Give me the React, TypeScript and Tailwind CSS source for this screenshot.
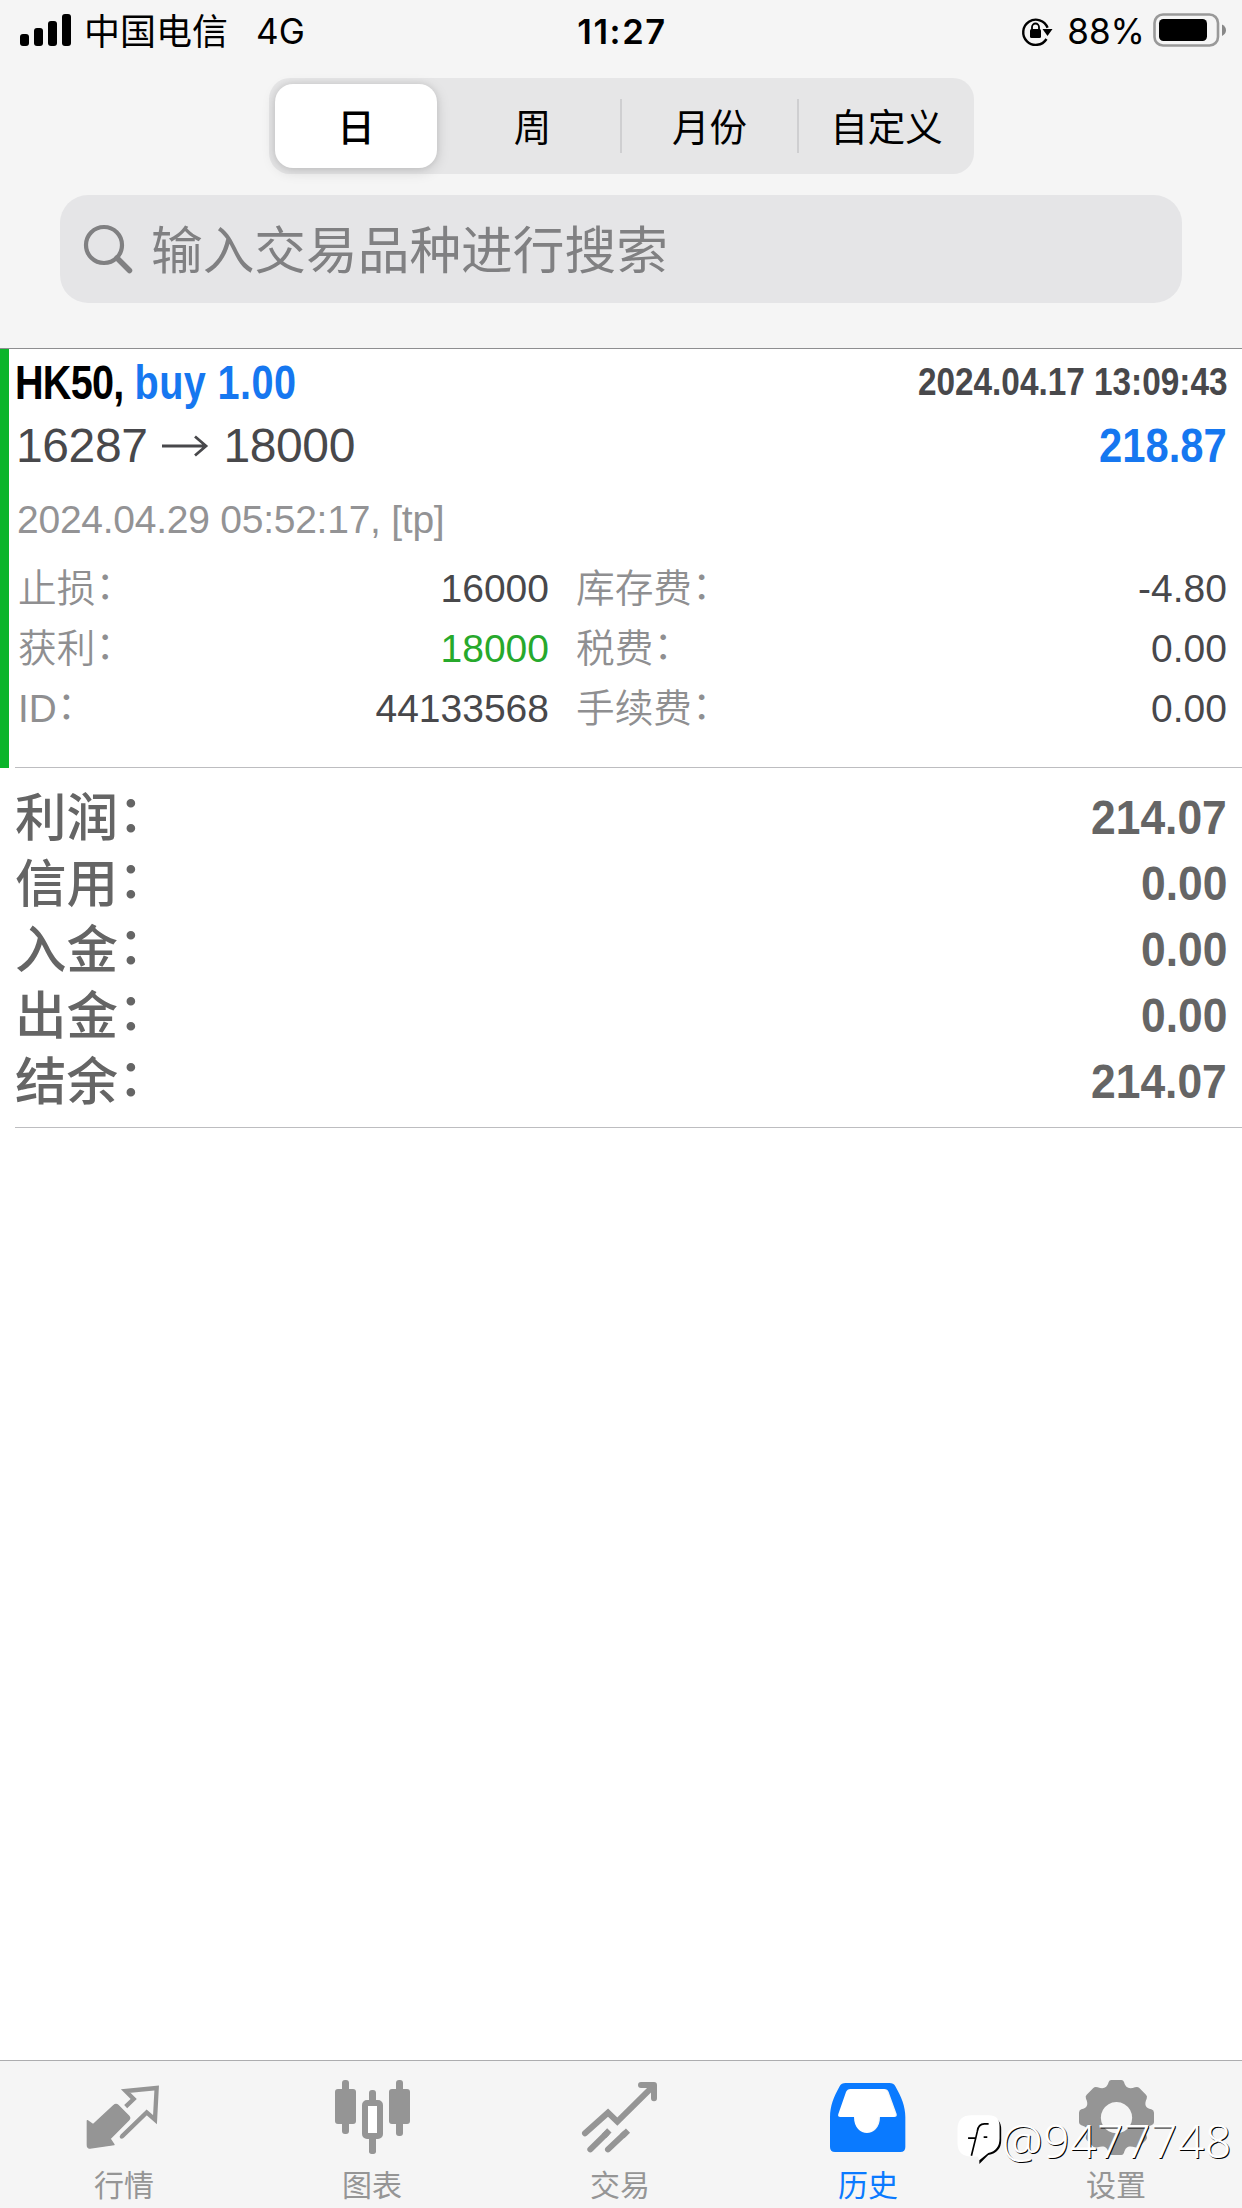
import type { ReactNode } from "react";
import clsx from "clsx";

type TTab = {
  label: string;
  active?: boolean;
  icon: ReactNode;
};

const periods = ["日", "周", "月份", "自定义"];

const details = [
  { label: "止损", value: "16000", label2: "库存费", value2: "-4.80" },
  { label: "获利", value: "18000", label2: "税费", value2: "0.00", green: true },
  { label: "ID", value: "44133568", label2: "手续费", value2: "0.00" },
];

const summary = [
  { label: "利润", value: "214.07" },
  { label: "信用", value: "0.00" },
  { label: "入金", value: "0.00" },
  { label: "出金", value: "0.00" },
  { label: "结余", value: "214.07" },
];

const tabs: TTab[] = [
  {
    label: "行情",
    icon: (
      <svg viewBox="252 78 240 240" className="size-20">
        <path
          d="M342 166q6-6 12 0l32 32q6 6 0 12l-56 56 12 18-72 10q-8 1-8-9v-73l17 12z"
          fill="currentColor"
          stroke="currentColor"
          strokeWidth="4"
          strokeLinejoin="round"
        />
        <path
          d="M377 170l24-23-24-24 93-9-5 95-25-22-74 72"
          fill="none"
          stroke="currentColor"
          strokeWidth="13"
        />
        <circle cx="365" cy="260" r="6" fill="currentColor" />
      </svg>
    ),
  },
  {
    label: "图表",
    icon: (
      <svg viewBox="996 78 240 240" className="size-20" fill="currentColor">
        <rect x="1026" y="90" width="21" height="162" rx="9" />
        <rect x="1005" y="117" width="63" height="105" rx="9" />
        <rect x="1188" y="90" width="21" height="168" rx="9" />
        <rect x="1167" y="117" width="63" height="105" rx="9" />
        <rect x="1107" y="120" width="21" height="40" rx="9" />
        <rect x="1107" y="255" width="21" height="57" rx="8" />
        <rect x="1095" y="159" width="45" height="99" rx="6" fill="white" stroke="currentColor" strokeWidth="18" />
      </svg>
    ),
  },
  {
    label: "交易",
    icon: (
      <svg
        viewBox="120 78 240 240"
        className="size-20"
        fill="none"
        stroke="currentColor"
        strokeWidth="18"
        strokeLinecap="round"
      >
        <path d="M135 250l69-62 28 27L338 110" />
        <path d="M303 105h39v40" strokeLinejoin="round" />
        <path d="M151 298l48-47M204 298l50-47" />
        <path d="M192 258l16-17M247 258l17-16" strokeLinecap="butt" />
      </svg>
    ),
  },
  {
    label: "历史",
    active: true,
    icon: (
      <svg viewBox="864 78 240 240" className="size-20">
        <path
          fill="white"
          d="M931 117h98q9 0 13 9l24 66q2 9-7 9h-43c0 64-78 64-78 0h-41q-9 0-6-9l23-66q4-9 13-9z"
        />
        <path
          fill="currentColor"
          fillRule="evenodd"
          d="M917 99h131q13 0 18 10c18 32 30 60 30 92v90q0 15-15 15H885q-15 0-15-15v-90c0-32 11-60 29-92q5-10 18-10zM931 117q-9 0-13 9l-23 66q-3 9 6 9h41c0 64 78 64 78 0h43q9 0 7-9l-24-66q-3-9-13-9z"
        />
      </svg>
    ),
  },
  {
    label: "设置",
    icon: (
      <svg viewBox="468 78 240 240" className="size-20">
        <path
          fill="currentColor"
          fillRule="evenodd"
          d="M574 90h30q6 0 8 6c5 18 15 22 33 16q8-3 13 2l20 20q5 5 2 12c-8 18-4 27 14 32q8 3 8 10v29q0 6-8 9c-18 5-22 15-14 32q3 7-2 12l-20 20q-5 5-13 2c-18-6-28-2-33 16q-2 7-8 7h-30q-6 0-8-7c-5-18-15-22-33-16q-8 3-13-2l-20-20q-5-5-2-12c8-17 4-27-14-32q-7-3-7-9v-29q0-7 7-10c18-5 22-14 14-32q-3-7 2-12l20-20q5-5 13-2c18 6 28 2 33-16q2-6 8-6zM589 156a47 47 0 1 0 1 0z"
        />
      </svg>
    ),
  },
];

const Colon = () => <span className="align-[0.07em] leading-none">：</span>;

const StatusBar = () => (
  <div className="grid h-[60px] grid-cols-3 font-['Inter','Noto_Sans_CJK_SC',sans-serif] text-[35px] leading-[62px] text-black">
    <div className="flex pl-5">
      <svg viewBox="0 0 52 60" className="h-[60px] w-[52px]">
        <rect x="0" y="34" width="9" height="12" rx="3" />
        <rect x="14" y="28" width="9" height="18" rx="3" />
        <rect x="28" y="21" width="9" height="25" rx="3" />
        <rect x="42" y="14" width="9" height="32" rx="3" />
      </svg>
      <span className="ml-3 text-[36px] leading-[64px]">中国电信</span>
      <span className="ml-7">4G</span>
    </div>
    <div className="pl-0.5 text-center text-[34.5px] leading-[63px] font-semibold tracking-[1.6px]">11:27</div>
    <div className="flex justify-end pr-[15px]">
      <svg viewBox="0 0 34 60" className="h-[60px] w-[34px]">
        <path d="M26.5 39A12.6 12.6 0 1 1 27.6 27.8" fill="none" stroke="black" strokeWidth="2.4" />
        <path d="M22.5 29h10l-5 7z" />
        <rect x="10" y="29" width="11" height="9" rx="1.5" />
        <path d="M12 30v-3a3.5 3.5 0 0 1 7 0v3" fill="none" stroke="black" strokeWidth="1.8" />
      </svg>
      <span className="ml-[13px]">88%</span>
      <svg viewBox="0 0 74 60" className="ml-2 h-[60px] w-[74px]">
        <rect x="1.5" y="14.5" width="63.5" height="31" rx="8.5" fill="none" stroke="#999" strokeWidth="2.6" />
        <rect x="6" y="19" width="48" height="22" rx="4.5" />
        <path d="M69 24.5q4 2 4 5.7t-4 5.7z" fill="#888" />
      </svg>
    </div>
  </div>
);

const Header = () => (
  <header className="h-[349px] border-b border-[#8e8e90] bg-[#f5f5f5]">
    <StatusBar />
    <div className="mt-[18px] mr-[268px] ml-[269px] flex h-24 items-center rounded-[21px] bg-[#e6e6e7] py-1.5 pl-1.5 text-[37.5px]">
      {periods.map((period, i) => (
        <div
          key={period}
          className={clsx(
            "flex items-center justify-center",
            i === 0 && "mr-2 h-[84px] w-[162px] rounded-[18px] bg-white font-medium shadow-[0_3px_14px_rgba(0,0,0,0.15),0_0_6px_rgba(0,0,0,0.08)]",
            i === 1 && "h-[54px] flex-1",
            i > 1 && "h-[54px] flex-1 border-l-2 border-[#cfcfd1]",
          )}
        >
          <span className="pt-[5px]">{period}</span>
        </div>
      ))}
    </div>
    <div className="mt-[21px] ml-[60px] flex h-[108px] w-[1122px] items-center rounded-[28px] bg-[#e5e5e7] pl-[23px] text-[51.7px] text-[#808082]">
      <svg viewBox="0 0 52 52" className="size-[52px]" fill="none" stroke="currentColor">
        <circle cx="21" cy="22" r="18" strokeWidth="4.2" />
        <path d="M34 35l12.5 12.5" strokeWidth="5.5" strokeLinecap="round" />
      </svg>
      <span className="ml-4 pt-[5px]">输入交易品种进行搜索</span>
    </div>
  </header>
);

const Trade = () => (
  <section className="flex h-[419px]">
    <div className="w-[9px] bg-[#0bb52b]" />
    <div className="ml-1.5 flex-1 border-b border-[#bdbdc0] pr-[15px]">
      <div className="flex h-[67px] items-center justify-between font-bold whitespace-nowrap">
        <div className="origin-left scale-x-[0.825] pt-px text-[48px]">
          <span className="tracking-[-0.9px] text-black">HK50,</span>{" "}
          <span className="tracking-[0.5px] text-[#1677f0]">buy 1.00</span>
        </div>
        <div className="origin-right scale-x-[0.866] pb-px text-[38.5px] text-[#48484b]">2024.04.17 13:09:43</div>
      </div>
      <div className="flex h-[60px] items-center justify-between text-[48px]">
        <div className="flex items-center pl-px tracking-[-0.4px] text-[#48484b]">
          16287
          <svg viewBox="0 0 48 24" className="mr-3.5 ml-[14px] h-6 w-12" fill="none" stroke="currentColor" strokeWidth="2.8">
            <path d="M1 12h44M34 2.500L45 12 34 21.500" />
          </svg>
          18000
        </div>
        <div className="origin-right scale-x-[0.87] font-bold text-[#1677f0]">218.87</div>
      </div>
      <div className="flex h-[83px] items-center pt-1.5 pl-0.5 text-[39px] tracking-[-0.25px] text-[#939395]">
        2024.04.29 05:52:17, [tp]
      </div>
      {details.map((row) => (
        <div key={row.label} className="flex h-[60px] items-center pl-[3px] text-[39px] text-[#48484b]">
          <div className="w-[200px] text-[38.7px] font-[350] text-[#8f8f91]">
            {row.label}
            <Colon />
          </div>
          <div className={clsx("w-[331px] text-right", row.green && "text-[#27a92c]")}>{row.value}</div>
          <div className="ml-[27px] text-[38.7px] font-[350] text-[#8f8f91]">
            {row.label2}
            <Colon />
          </div>
          <div className="ml-auto">{row.value2}</div>
        </div>
      ))}
    </div>
  </section>
);

const Summary = () => (
  <section className="ml-[15px] h-[360px] border-b border-[#bdbdc0] pt-[17px] pr-[15px] text-[#656565]">
    {summary.map((row) => (
      <div key={row.label} className="flex h-[66px] items-center justify-between leading-[66px]">
        <span className="text-[51.5px] font-medium">
          {row.label}
          <Colon />
        </span>
        <span className="origin-right scale-x-[0.925] text-[48px] font-bold">{row.value}</span>
      </div>
    ))}
  </section>
);

const Watermark = () => (
  <div className="absolute top-[52px] right-2.5 flex items-center text-white">
    <svg viewBox="98 205 150 160" className="-mr-1 h-[53px] w-[50px]">
      <path d="M150 219h50q34 0 34 35v34q0 36-39 44l-27 27v-17z" fill="black" />
      <path d="M145 212h52q32 0 32 34v36q0 36-34 44l-27 22-5-12h-20q-41 0-41-42v-40q0-42 43-42z" fill="white" />
      <path d="M196 238h-13q-18 0-21 22l-4 17-14 57M134 281h24M181 278h11" fill="none" stroke="black" strokeWidth="5" />
    </svg>
    <span className="font-['Noto_Sans',sans-serif] text-[46px] leading-[46px] font-light tracking-[0.7px] [text-shadow:1px_1px_0_black]">
      @9477748
    </span>
  </div>
);

const TabBar = () => (
  <nav className="relative mt-auto flex h-[148px] border-t border-[#adadaf] bg-[#f5f5f5] pr-0.5">
    {tabs.map(({ label, icon, active }) => (
      <div
        key={label}
        className={clsx("flex flex-1 flex-col items-center pt-[15px]", active ? "text-[#0a7aff]" : "text-[#959595]")}
      >
        {icon}
        <span className="mt-[11px] text-[30px] leading-[38px]">{label}</span>
      </div>
    ))}
    <Watermark />
  </nav>
);

const App = () => (
  <div className="flex h-[2208px] w-[1242px] flex-col overflow-hidden bg-white font-['Liberation_Sans','Noto_Sans_CJK_SC',sans-serif] text-black">
    <Header />
    <Trade />
    <Summary />
    <TabBar />
  </div>
);

export default App;
